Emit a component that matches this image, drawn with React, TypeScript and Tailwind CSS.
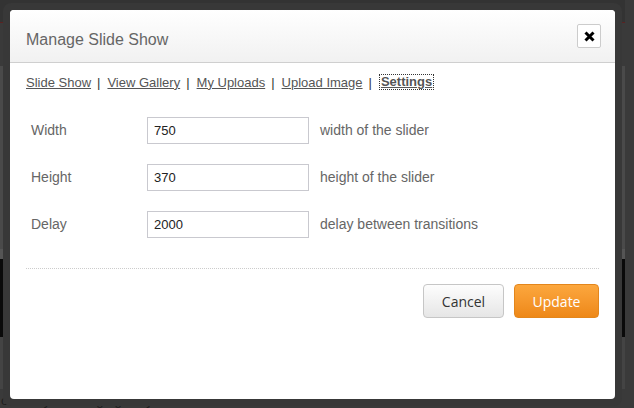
import React from "react";

const sans = { fontFamily: '"Liberation Sans", Arial, sans-serif' };

function Row({ label, value, desc }: { label: string; value: string; desc: string }) {
  return (
    <div className="flex items-center h-[27px]">
      <div className="w-[116px] text-[14px] text-[#666]">{label}</div>
      <input
        readOnly
        value={value}
        className="w-[162px] h-[27px] border border-[#c9c9cf] bg-white pl-[6px] text-[13px] text-[#222] outline-none"
        style={sans}
      />
      <div className="ml-[11px] text-[14px] text-[#666]">{desc}</div>
    </div>
  );
}

function Sep() {
  return <span className="ml-[6px] mr-[7px] text-[#333]">|</span>;
}

export default function App() {
  return (
    <div className="relative w-[634px] h-[408px] overflow-hidden bg-[#3a3a3a] flex" style={sans}>
      {/* page behind overlay */}
      <div className="flex flex-col flex-1 h-full">
        <div className="h-[22px] bg-[#333]" />
        <div className="h-[2px] bg-[#5a2222]" />
        <div className="h-[44px] bg-[#3a3a3a]" />
        <div className="h-[187px] bg-[#4a4a4a]" />
        <div className="h-[10px] bg-[#555]" />
        <div className="h-[80px] bg-[#0a0a0a]" />
        <div className="h-[53px] bg-[#444]" />
        <div className="flex-1 bg-[#3a3a3a] text-[13px] leading-[15px] text-[#1e1e1e] pt-[4px] pl-[1px]">
          o modify the image gallery
        </div>
      </div>
      <div className="w-[9px] h-full bg-[#3a3a3a]" />

      {/* modal */}
      <div className="absolute left-[3px] top-[3px] w-[619px] h-[403px] rounded-[8px] bg-[#383838] p-[7px]">
        <div className="w-[605px] h-[389px] rounded-[4px] bg-white flex flex-col">
          <div className="h-[53px] border-b border-[#cfcfcf] bg-gradient-to-b from-white to-[#f1f1f1] rounded-t-[4px] flex justify-between pl-[16px] pr-[14px]">
            <div className="mt-[21px] text-[16px] leading-[18px] text-[#666]">Manage Slide Show</div>
            <div className="mt-[14px] w-[24px] h-[24px] border border-[#cccccc] rounded-[2px] bg-white flex items-center justify-center">
              <svg width="11" height="11" viewBox="0 0 11 11">
                <path d="M1.5 1.5 L9.5 9.5 M9.5 1.5 L1.5 9.5" stroke="#000" strokeWidth="3" />
              </svg>
            </div>
          </div>

          <div className="pl-[16px] pt-[11px] text-[13px] leading-[15px] text-[#555] flex items-center">
            <span className="underline">Slide Show</span>
            <Sep />
            <span className="underline">View Gallery</span>
            <Sep />
            <span className="underline">My Uploads</span>
            <Sep />
            <span className="underline">Upload Image</span>
            <Sep />
            <span className="underline font-bold border border-dotted border-[#333] px-[1px] leading-[14px]">Settings</span>
          </div>

          <div className="pl-[21px] pt-[27px] flex flex-col gap-[20px]">
            <Row label="Width" value="750" desc="width of the slider" />
            <Row label="Height" value="370" desc="height of the slider" />
            <Row label="Delay" value="2000" desc="delay between transitions" />
          </div>

          <div className="mx-[16px] mt-[30px] border-t border-dotted border-[#cccccc]" />

          <div className="flex justify-end gap-[10px] pr-[16px] mt-[15px]" style={{ fontFamily: '"Open Sans", sans-serif' }}>
            <div className="w-[81px] h-[34px] rounded-[4px] border border-[#c6c6c6] bg-gradient-to-b from-[#fdfdfd] to-[#e6e6e6] flex items-center justify-center text-[14px] text-[#333]">
              Cancel
            </div>
            <div className="w-[85px] h-[34px] rounded-[4px] border border-[#e3861c] bg-gradient-to-b from-[#fca73d] to-[#ee8816] flex items-center justify-center text-[14px] text-white">
              Update
            </div>
          </div>
        </div>
      </div>
    </div>
  );
}
